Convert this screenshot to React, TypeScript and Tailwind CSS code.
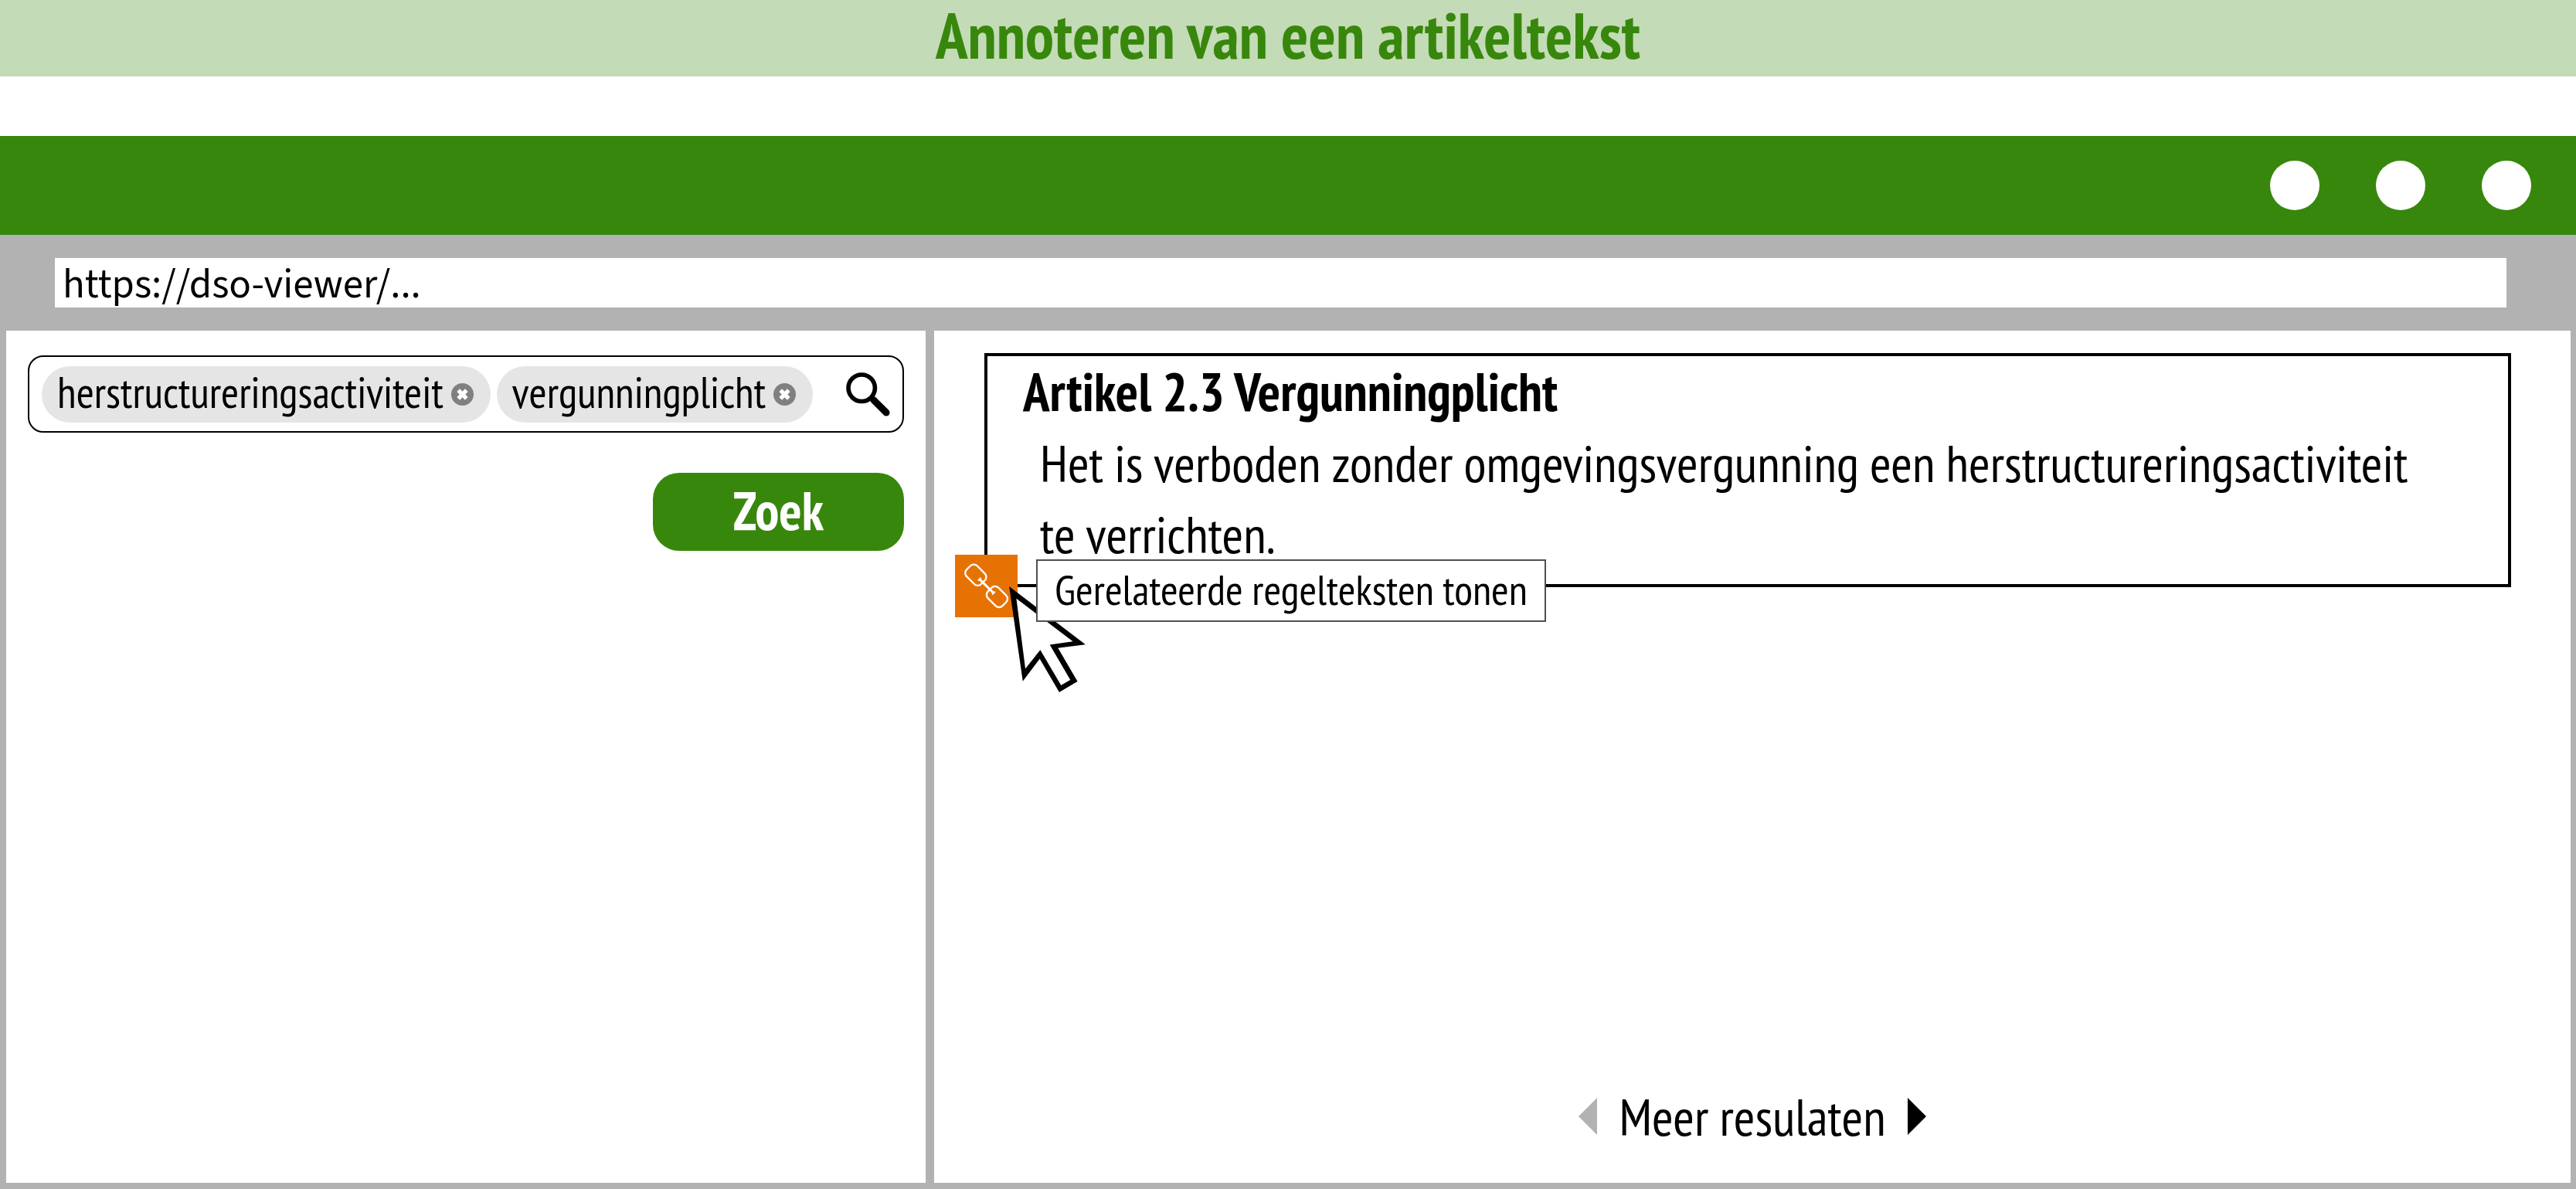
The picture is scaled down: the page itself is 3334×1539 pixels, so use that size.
import { useState } from 'react';

function RemoveIcon() {
  return (
    <svg viewBox="0 0 88 88" className="size-[29px]" aria-hidden="true">
      <circle cx="44" cy="44" r="44" fill="#808080" />
      <path d="M28 28L60 60M60 28L28 60" stroke="#fff" strokeWidth="16" />
    </svg>
  );
}

function SearchIcon() {
  return (
    <svg viewBox="0 0 172 172" className="size-[57px]" fill="none" stroke="#000" aria-hidden="true">
      <circle cx="61" cy="61" r="52" strokeWidth="17" />
      <path d="M98 98L106 106" strokeWidth="18" />
      <path d="M108 108L157 157" strokeWidth="27" strokeLinecap="round" />
    </svg>
  );
}

function ChainIcon() {
  return (
    <svg viewBox="0 0 244 244" className="size-full" fill="none" stroke="#fff" aria-hidden="true">
      <rect x="-40" y="-29" width="80" height="58" rx="19" strokeWidth="7" transform="translate(81 79) rotate(45)" />
      <rect x="-40" y="-29" width="80" height="58" rx="19" strokeWidth="7" transform="translate(164 164) rotate(45)" />
      <path d="M94 94L152 151" strokeWidth="9" />
      <path d="M90 101L101 90M145 155L156 144" strokeWidth="6" />
    </svg>
  );
}

function PointerIcon() {
  return (
    <svg viewBox="0 0 297 412" className="h-[137px] w-[99px]" aria-hidden="true">
      <path d="M0 0L297 226L190 240L266 370L195 412L119 282L53 369Z" fill="#000" />
      <path d="M28 47L248 214L158 227L238 364L202 385L121 247L63 320Z" fill="#fff" />
    </svg>
  );
}

function Chip({ label, onRemove }: { label: string; onRemove: () => void }) {
  return (
    <li className="flex h-[73px] shrink-0 items-center gap-[10px] rounded-full bg-[#e5e5e5] pr-[22px] pl-5">
      <span className="pb-[6px] text-[56px] leading-[66px] whitespace-nowrap">{label}</span>
      <button type="button" aria-label={`Verwijder ${label}`} onClick={onRemove}>
        <RemoveIcon />
      </button>
    </li>
  );
}

export default function App() {
  const [terms, setTerms] = useState(['herstructureringsactiviteit', 'vergunningplicht']);

  return (
    <div className="flex min-h-screen flex-col bg-white font-['PT_Sans_Narrow','Open_Sans_Condensed','Roboto_Condensed',sans-serif] text-black">
      <h1 className="bg-[#c4dbb7] pb-2 text-center text-[83px] leading-[91px] font-bold text-[#38870d]">
        Annoteren van een artikeltekst
      </h1>

      <div className="mt-[77px] flex flex-1 flex-col bg-[#b2b2b2]">
        <header className="flex h-32 items-center justify-end gap-[73px] bg-[#38870d] pr-[58px]">
          <span className="size-16 rounded-full bg-white" />
          <span className="size-16 rounded-full bg-white" />
          <span className="size-16 rounded-full bg-white" />
        </header>

        <div className="pt-[30px] pr-[90px] pb-[30px] pl-[71px]">
          <input
            type="text"
            aria-label="Adres"
            defaultValue="https://dso-viewer/..."
            className="block h-16 w-full bg-white px-[10px] pt-1 font-['Source_Sans_3','Open_Sans',sans-serif] text-[53px] leading-[60px] outline-none"
          />
        </div>

        <main className="grid flex-1 grid-cols-[1190fr_2118fr] gap-[11px] pr-[7px] pb-2 pl-2">
          <section className="flex flex-col items-end gap-[52px] bg-white px-7 pt-8">
            <div className="flex h-[100px] w-full items-center rounded-[20px] border-2 border-black pr-4 pl-4">
              <ul className="flex gap-2">
                {terms.map((term) => (
                  <Chip key={term} label={term} onRemove={() => setTerms(terms.filter((t) => t !== term))} />
                ))}
              </ul>
              <input type="text" aria-label="Zoekterm" className="h-full w-0 min-w-0 flex-1 outline-none" />
              <button type="button" aria-label="Zoeken">
                <SearchIcon />
              </button>
            </div>
            <button
              type="button"
              className="h-[101px] w-[325px] rounded-[34px] bg-[#38870d] pb-1 text-[69px] leading-[96px] font-bold text-white"
            >
              Zoek
            </button>
          </section>

          <section className="flex flex-col bg-white pt-[29px]">
            <article className="relative mr-[77px] ml-[65px] border-4 border-black pr-[110px] pb-[19px] pl-[46px]">
              <h2 className="text-[69px] leading-[92px] font-bold">Artikel 2.3 Vergunningplicht</h2>
              <p className="pl-[22px] text-[67px] leading-[92px]">
                Het is verboden zonder omgevingsvergunning een herstructureringsactiviteit te verrichten.
              </p>
              <button
                type="button"
                aria-label="Gerelateerde regelteksten"
                aria-describedby="link-tip"
                className="absolute -bottom-[43px] -left-[42px] size-[81px] bg-[#e77204]"
              >
                <ChainIcon />
              </button>
              <span className="absolute -bottom-[140px] left-7">
                <PointerIcon />
              </span>
              <span
                id="link-tip"
                role="tooltip"
                className="absolute -bottom-[49px] left-[63px] h-[81px] w-[660px] border-2 border-[#505050] bg-white text-center text-[55px] leading-[73px] whitespace-nowrap"
              >
                Gerelateerde regelteksten tonen
              </span>
            </article>

            <nav aria-label="Resultaten" className="mt-auto flex items-center justify-center gap-7 pb-10">
              <button type="button" aria-label="Vorige resultaten" disabled>
                <svg viewBox="0 0 24 48" className="h-12 w-6" aria-hidden="true">
                  <path d="M24 0V48L0 24Z" fill="#b2b2b2" />
                </svg>
              </button>
              <span className="text-[67px] leading-[92px]">Meer resulaten</span>
              <button type="button" aria-label="Volgende resultaten">
                <svg viewBox="0 0 24 48" className="h-12 w-6" aria-hidden="true">
                  <path d="M0 0V48L24 24Z" fill="#000" />
                </svg>
              </button>
            </nav>
          </section>
        </main>
      </div>
    </div>
  );
}
